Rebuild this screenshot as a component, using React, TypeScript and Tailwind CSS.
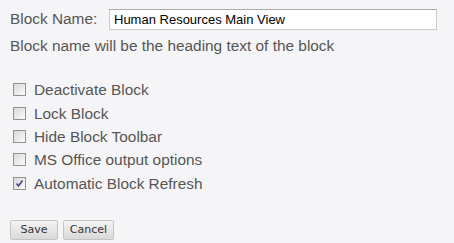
import React from "react";

const items = [
  { label: "Deactivate Block", checked: false },
  { label: "Lock Block", checked: false },
  { label: "Hide Block Toolbar", checked: false },
  { label: "MS Office output options", checked: false },
  { label: "Automatic Block Refresh", checked: true },
];

function Box({ checked }: { checked: boolean }) {
  return (
    <span className="w-[13px] h-[13px] border border-[#939393] bg-gradient-to-br from-[#d8d8d8] to-[#fbfbfb] flex items-center justify-center shrink-0">
      {checked && (
        <svg width="9" height="9" viewBox="0 0 9 9">
          <path d="M1.5 4.5 L3.5 7 L7.5 1.5" fill="none" stroke="#3b4a8c" strokeWidth="1.6" />
        </svg>
      )}
    </span>
  );
}

export default function App() {
  return (
    <div className="w-[454px] h-[243px] bg-[#f5f5f7] text-[#555] font-['Liberation_Sans',Arial,sans-serif] pl-[10px] pt-[9px] overflow-hidden">
      <div className="flex items-center h-[21px]">
        <span className="text-[15.4px] w-[99px] leading-[21px] -mt-[3px]">Block Name:</span>
        <div className="w-[328px] h-[21px] bg-white border border-[#c9c9c9] border-t-[#a9a9a9] flex items-center pl-[4px] text-[13px] text-black">
          Human Resources Main View
        </div>
      </div>
      <div className="text-[15.4px] leading-[20px] mt-[6px]">Block name will be the heading text of the block</div>
      <div className="mt-[22px] pl-[3px] flex flex-col">
        {items.map((it) => (
          <div key={it.label} className="flex items-center gap-[8px] h-[23.4px] text-[15.4px]">
            <Box checked={it.checked} />
            <span>{it.label}</span>
          </div>
        ))}
      </div>
      <div className="flex gap-[5px] mt-[25px] font-['DejaVu_Sans',sans-serif]">
        <button className="w-[48px] h-[20px] text-[11px] text-[#333] border border-[#c4c4c4] rounded-[2px] bg-gradient-to-b from-[#f4f4f4] to-[#d9d9d9]">Save</button>
        <button className="w-[51px] h-[20px] text-[11px] text-[#333] border border-[#c4c4c4] rounded-[2px] bg-gradient-to-b from-[#f4f4f4] to-[#d9d9d9]">Cancel</button>
      </div>
    </div>
  );
}
